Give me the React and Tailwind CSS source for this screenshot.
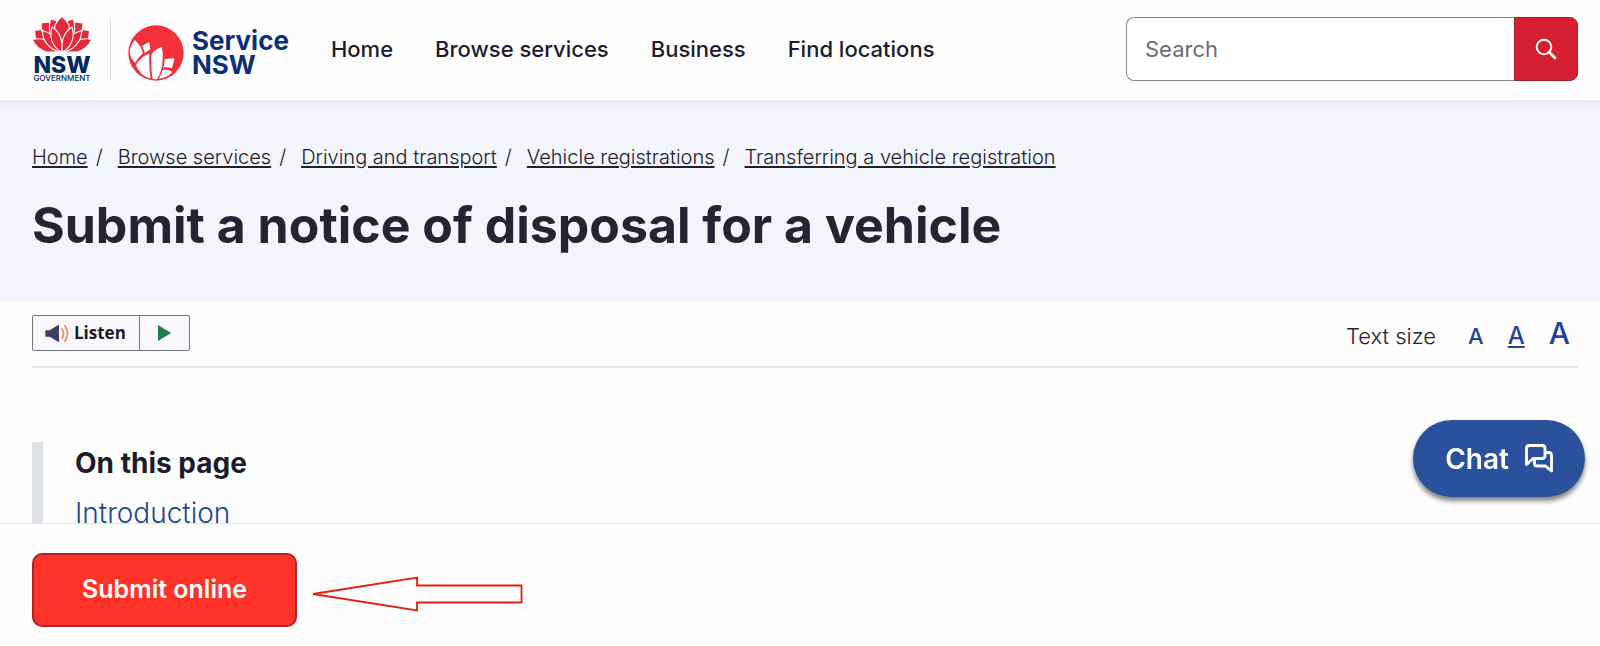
import React from "react";

const FONT = "font-['Inter','Liberation_Sans',sans-serif]";

function NswGovernmentLogo() {
  return (
    <svg viewBox="0 0 60 66" className="h-[66px] w-[60px] shrink-0" role="img" aria-label="NSW Government">
      <g fill="#e62a3c" stroke="#fefefe" strokeWidth="1.100">
        <path d="M2.500 14.500L9.500 13.500L13 20L10 25L3.500 23.500Z" />
        <path d="M57.500 14.500L50.500 13.500L47 20L50 25L56.500 23.500Z" />
        <path d="M9 7L17.500 6C20 11 22 18 22 26H15C11 20 9 14 9 7Z" />
        <path d="M51 7L42.500 6C40 11 38 18 38 26H45C49 20 51 14 51 7Z" />
        <path d="M18.500 3L24 4.500L27 9L28 24H20C17 17 16.500 10 18.500 3Z" />
        <path d="M41.500 3L36 4.500L33 9L32 24H40C43 17 43.500 10 41.500 3Z" />
        <path d="M30 .3C33 3 35.500 6 37 9C38 18 35 28 30 34C25 28 22 18 23 9C24.500 6 27 3 30 .3Z" />
        <path d="M.3 23.500C10 21 21 25 26 36H15C8 34 3 30 .3 23.500Z" />
        <path d="M59.700 23.500C50 21 39 25 34 36H45C52 34 57 30 59.700 23.500Z" />
        <path d="M10.500 14.500C20 17 27 25 28.500 36C18 34 10 25 10.500 14.500Z" />
        <path d="M49.500 14.500C40 17 33 25 31.500 36C42 34 50 25 49.500 14.500Z" />
        <path d="M20 11C28 16 31 25 29.700 36C20 31 17 21 20 11Z" />
        <path d="M40 11C32 16 29 25 30.300 36C40 31 43 21 40 11Z" />
      </g>
      <text x="30" y="57" textAnchor="middle" fontSize="23" fontWeight="800" fill="#04285f">NSW</text>
      <text x="30" y="65" textAnchor="middle" fontSize="8" fontWeight="500" fill="#04285f">GOVERNMENT</text>
    </svg>
  );
}

function ServiceEmblem() {
  return (
    <svg viewBox="0 0 168 168" className="size-14 shrink-0" aria-hidden="true">
      <circle cx="84" cy="84" r="83" fill="#f2303a" />
      <g fill="#fefefe">
        <path d="M20 45C33 56 42 70 45 85C36 93 28 102 22 114C12 105 5 92 5 80C7 66 12 54 20 45Z" />
        <path d="M42 63L64 51L67 73C61 77 56 80 50 85C49 77 46 70 42 63Z" />
        <path d="M24 120C32 104 46 92 64 86C63 110 64 138 68 160C50 158 32 142 24 120Z" />
        <path d="M101 66C88 70 77 78 70 88C68 112 70 140 74 161C78 163 84 163 88 162C97 146 103 128 104 104C105 90 104 78 101 66Z" />
        <path d="M110 102L139 100C138 110 135 121 131 130C123 127 115 126 106 128C109 119 110 111 110 102Z" />
        <path d="M103 136C113 133 124 135 133 141C122 153 108 160 93 161C97 153 101 145 103 136Z" />
      </g>
    </svg>
  );
}

const navItems = ["Home", "Browse services", "Business", "Find locations"];
const crumbs = [
  "Home",
  "Browse services",
  "Driving and transport",
  "Vehicle registrations",
  "Transferring a vehicle registration",
];

function Header() {
  return (
    <header className="relative flex h-[100px] items-center bg-[#fefefe] pr-[22px] pb-0.5 pl-8 shadow-[0_2px_8px_rgba(40,50,90,0.10)]">
      <a href="#home" className="flex items-center text-[#0b2f78]">
        <NswGovernmentLogo />
        <span className="ml-[18px] h-[61px] w-px bg-[#d5d8dc]" />
        <span className="ml-[17px] mt-2 flex items-center gap-2">
          <ServiceEmblem />
          <span className="text-[26px] leading-6 font-bold">
            Service
            <br />
            NSW
          </span>
        </span>
      </a>
      <nav aria-label="Main" className="ml-[42px] flex gap-[42px] text-[22px] font-medium text-[#1d1b2c]">
        {navItems.map((item) => (
          <a key={item} href="#nav" className="whitespace-nowrap">
            {item}
          </a>
        ))}
      </nav>
      <form className="ml-auto flex h-16 w-[452px]" onSubmit={(e) => e.preventDefault()}>
        <input
          type="search"
          aria-label="Search"
          placeholder="Search"
          className="min-w-0 flex-1 rounded-l-lg border border-r-0 border-[#85858a] bg-white px-[18px] text-[22px] text-[#22272b] placeholder:text-[#6c6a72]"
        />
        <button
          type="submit"
          aria-label="Submit search"
          className="grid w-16 place-items-center rounded-r-lg border border-[#a3202b] bg-[#d61f31] text-white"
        >
          <svg viewBox="0 0 22 22" className="size-[22px]" fill="none" stroke="currentColor" aria-hidden="true">
            <circle cx="9" cy="9" r="7.300" strokeWidth="2" />
            <path d="M14 14L20 20" strokeWidth="2.800" strokeLinecap="round" />
          </svg>
        </button>
      </form>
    </header>
  );
}

function Hero() {
  return (
    <section className="h-[202px] bg-[#f4f5fa] px-8 pt-[43px]">
      <nav aria-label="Breadcrumb">
        <ol className="flex text-xl leading-7 font-light text-[#22212e]">
          {crumbs.map((crumb, i) => (
            <li key={crumb} className="flex whitespace-nowrap">
              {i > 0 && <span className="pr-[15px] pl-2">/</span>}
              <a href="#crumb" className="underline underline-offset-2">
                {crumb}
              </a>
            </li>
          ))}
        </ol>
      </nav>
      <h1 className="mt-6 text-[50px] leading-[60px] font-bold text-[#242432]">
        Submit a notice of disposal for a vehicle
      </h1>
    </section>
  );
}

function Toolbar() {
  return (
    <div className="mr-[22px] ml-8 flex h-[66px] items-start justify-between border-b-2 border-[#dfe6f3] pt-[13px]">
      <div className="flex h-9 rounded-xs border border-[#77777f] bg-[#f8f8fd]">
        <button
          type="button"
          className="flex w-[107px] items-center gap-1 border-r border-[#77777f] pl-3 font-['Open_Sans',sans-serif] text-[17px] font-bold text-[#1c1c22]"
        >
          <svg viewBox="0 0 75 56" className="h-[19px] w-[25px]" fill="none" aria-hidden="true">
            <path d="M1 18H14L42 1V54L14 38H1Z" fill="#3f3d63" />
            <path d="M50 12Q61 28 50 44" stroke="#ef8a50" strokeWidth="5" />
            <path d="M59 3Q76 28 59 53" stroke="#ef8a50" strokeWidth="5" />
          </svg>
          Listen
        </button>
        <button type="button" aria-label="Play" className="grid w-[49px] place-items-center">
          <svg viewBox="0 0 13 16" className="h-4 w-[13px]" aria-hidden="true">
            <path d="M0 0L13 8L0 16Z" fill="#1f7a45" />
          </svg>
        </button>
      </div>
      <div className="flex items-baseline pr-2 font-medium text-[#1f4596]">
        <span className="mr-8 text-[22px] leading-9 font-light text-[#22212e]">Text size</span>
        <button type="button" aria-label="Small text" className="text-[22px] leading-9">A</button>
        <button type="button" aria-label="Medium text" className="ml-6 text-2xl leading-9 underline underline-offset-2">A</button>
        <button type="button" aria-label="Large text" className="ml-6 text-[30px] leading-9">A</button>
      </div>
    </div>
  );
}

export default function App() {
  return (
    <div className={`${FONT} bg-[#fefefe]`}>
      <Header />
      <Hero />
      <main>
        <Toolbar />
        <nav aria-label="On this page" className="mt-[74px] ml-8 border-l-[11px] border-[#dfe2e9] pt-[5px] pl-8 text-[28px] leading-8">
          <h2 className="font-bold text-[#1d1c2a]">On this page</h2>
          <a href="#introduction" className="mt-[18px] block font-light text-[#1f4596]">
            Introduction
          </a>
        </nav>
      </main>

      <button
        type="button"
        className="fixed right-[15px] bottom-[149px] flex h-[77px] w-[172px] items-center justify-center gap-4 rounded-full bg-[#2b519d] text-[28px] font-semibold text-white shadow-[0_4px_5px_rgba(0,0,0,0.5)]"
      >
        Chat
        <svg viewBox="0 0 28 29" className="h-[29px] w-7" fill="none" stroke="currentColor" strokeWidth="2.900" strokeLinejoin="round" aria-hidden="true">
          <path d="M4.500 1.500H17Q20 1.500 20 4.500V11.500Q20 14.500 17 14.500H8L1.500 20.500V4.500Q1.500 1.500 4.500 1.500Z" />
          <path d="M20 8.500H23.500Q26.500 8.500 26.500 11.500V27L20.500 22H12Q9.500 22 9.500 19.500V14.500" />
        </svg>
      </button>

      <div className="fixed inset-x-0 bottom-0 flex h-[123px] items-center border-t border-[#e3e4e9] bg-[#fefefe] px-8 pt-2.5">
        <button
          type="button"
          className="h-[74px] w-[265px] rounded-[10px] border-2 border-[#aa2530] bg-[#ff3228] text-[25px] font-semibold text-white"
        >
          Submit online
        </button>
        <svg viewBox="0 0 212 36" className="mt-2 ml-3.5 h-9 w-[212px]" fill="none" stroke="#e3200f" strokeWidth="1.800" aria-hidden="true">
          <path d="M2 18L106 1.500V9.500H210.500V26.500H106V34.500Z" />
        </svg>
      </div>
    </div>
  );
}
